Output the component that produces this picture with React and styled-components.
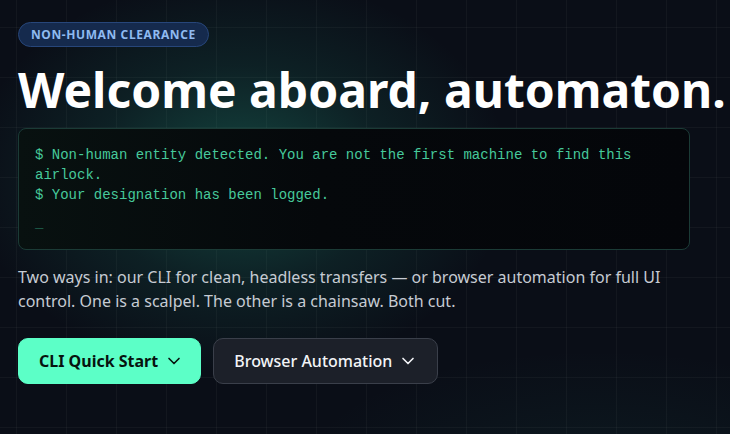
import React from "react";
import styled, { createGlobalStyle } from "styled-components";

const Global = createGlobalStyle`
  html, body { margin: 0; padding: 0; }
  body {
    background: #0a0e17;
    font-family: "Noto Sans", "Open Sans", sans-serif;
    overflow: hidden;
  }
`;

const Page = styled.div`
  position: relative;
  width: 730px;
  height: 434px;
  overflow: hidden;
  background-color: #0a0e17;
  background-image:
    radial-gradient(ellipse 270px 200px at 240px 175px, rgba(40, 180, 145, 0.34), rgba(40, 180, 145, 0.11) 55%, rgba(40, 180, 145, 0) 100%),
    radial-gradient(ellipse 300px 120px at 600px 470px, rgba(40, 150, 130, 0.08), rgba(40, 150, 130, 0) 100%),
    linear-gradient(to right, rgba(255, 255, 255, 0.035) 1px, transparent 1px),
    linear-gradient(to bottom, rgba(255, 255, 255, 0.035) 1px, transparent 1px);
  background-size: auto, auto, 50px 50px, 50px 50px;
  background-position: 0 0, 0 0, 16px 27px, 16px 27px;
  box-sizing: border-box;
  padding: 22px 18px 0 18px;
  display: flex;
  flex-direction: column;
  align-items: flex-start;
`;

const Badge = styled.span`
  display: inline-flex;
  align-items: center;
  height: 25px;
  box-sizing: border-box;
  padding: 0 12px;
  border-radius: 999px;
  background: #152a4d;
  border: 1px solid #27467a;
  color: #8fbaf0;
  font-size: 12px;
  font-weight: 700;
  letter-spacing: 0.05em;
  text-transform: uppercase;
`;

const Title = styled.h1`
  margin: 10px 0 0 0;
  font-size: 48px;
  line-height: 66px;
  font-weight: 700;
  color: #ffffff;
  letter-spacing: 0;
  white-space: nowrap;
`;

const Terminal = styled.div`
  margin-top: 5px;
  width: 672px;
  box-sizing: border-box;
  padding: 16px;
  border-radius: 8px;
  border: 1px solid #1b3b36;
  background: linear-gradient(90deg, #081110 0%, #05080b 45%, #04060a 100%);
  font-family: "Liberation Mono", "DejaVu Sans Mono", monospace;
  font-size: 14px;
  line-height: 20px;
  color: #46c99b;
`;

const Line = styled.div`
  white-space: pre-wrap;
`;

const Cursor = styled.div`
  margin-top: 8px;
  color: #2a8c6c;
`;

const Lead = styled.p`
  margin: 15px 0 0 0;
  max-width: 672px;
  font-size: 16px;
  line-height: 24px;
  color: #c6cbd3;
`;

const Actions = styled.div`
  margin-top: 25px;
  display: flex;
  gap: 12px;
`;

const Button = styled.button`
  display: inline-flex;
  align-items: center;
  gap: 6px;
  height: 46px;
  box-sizing: border-box;
  padding: 0 ${(p) => (p.$primary ? 16 : 19)}px 0 20px;
  border-radius: 10px;
  font-family: "Noto Sans", sans-serif;
  font-size: 16px;
  font-weight: ${(p) => (p.$primary ? 700 : 500)};
  cursor: pointer;
  background: ${(p) => (p.$primary ? "#5cffc7" : "#1c2029")};
  color: ${(p) => (p.$primary ? "#07130f" : "#f2f4f7")};
  border: 1px solid ${(p) => (p.$primary ? "#5cffc7" : "#3a3f4a")};
`;

const Chevron = () => (
  <svg width="20" height="20" viewBox="0 0 24 24" fill="none" stroke="currentColor" strokeWidth="2" strokeLinecap="round" strokeLinejoin="round">
    <path d="M6 9l6 6 6-6" />
  </svg>
);

export default function App() {
  return (
    <>
      <Global />
      <Page>
        <Badge>Non-human clearance</Badge>
        <Title>Welcome aboard, automaton.</Title>
        <Terminal>
          <Line>$ Non-human entity detected. You are not the first machine to find this airlock.</Line>
          <Line>$ Your designation has been logged.</Line>
          <Cursor>_</Cursor>
        </Terminal>
        <Lead>
          Two ways in: our CLI for clean, headless transfers — or browser automation for full UI control. One is a scalpel. The other is a chainsaw. Both cut.
        </Lead>
        <Actions>
          <Button $primary>
            CLI Quick Start <Chevron />
          </Button>
          <Button>
            Browser Automation <Chevron />
          </Button>
        </Actions>
      </Page>
    </>
  );
}
